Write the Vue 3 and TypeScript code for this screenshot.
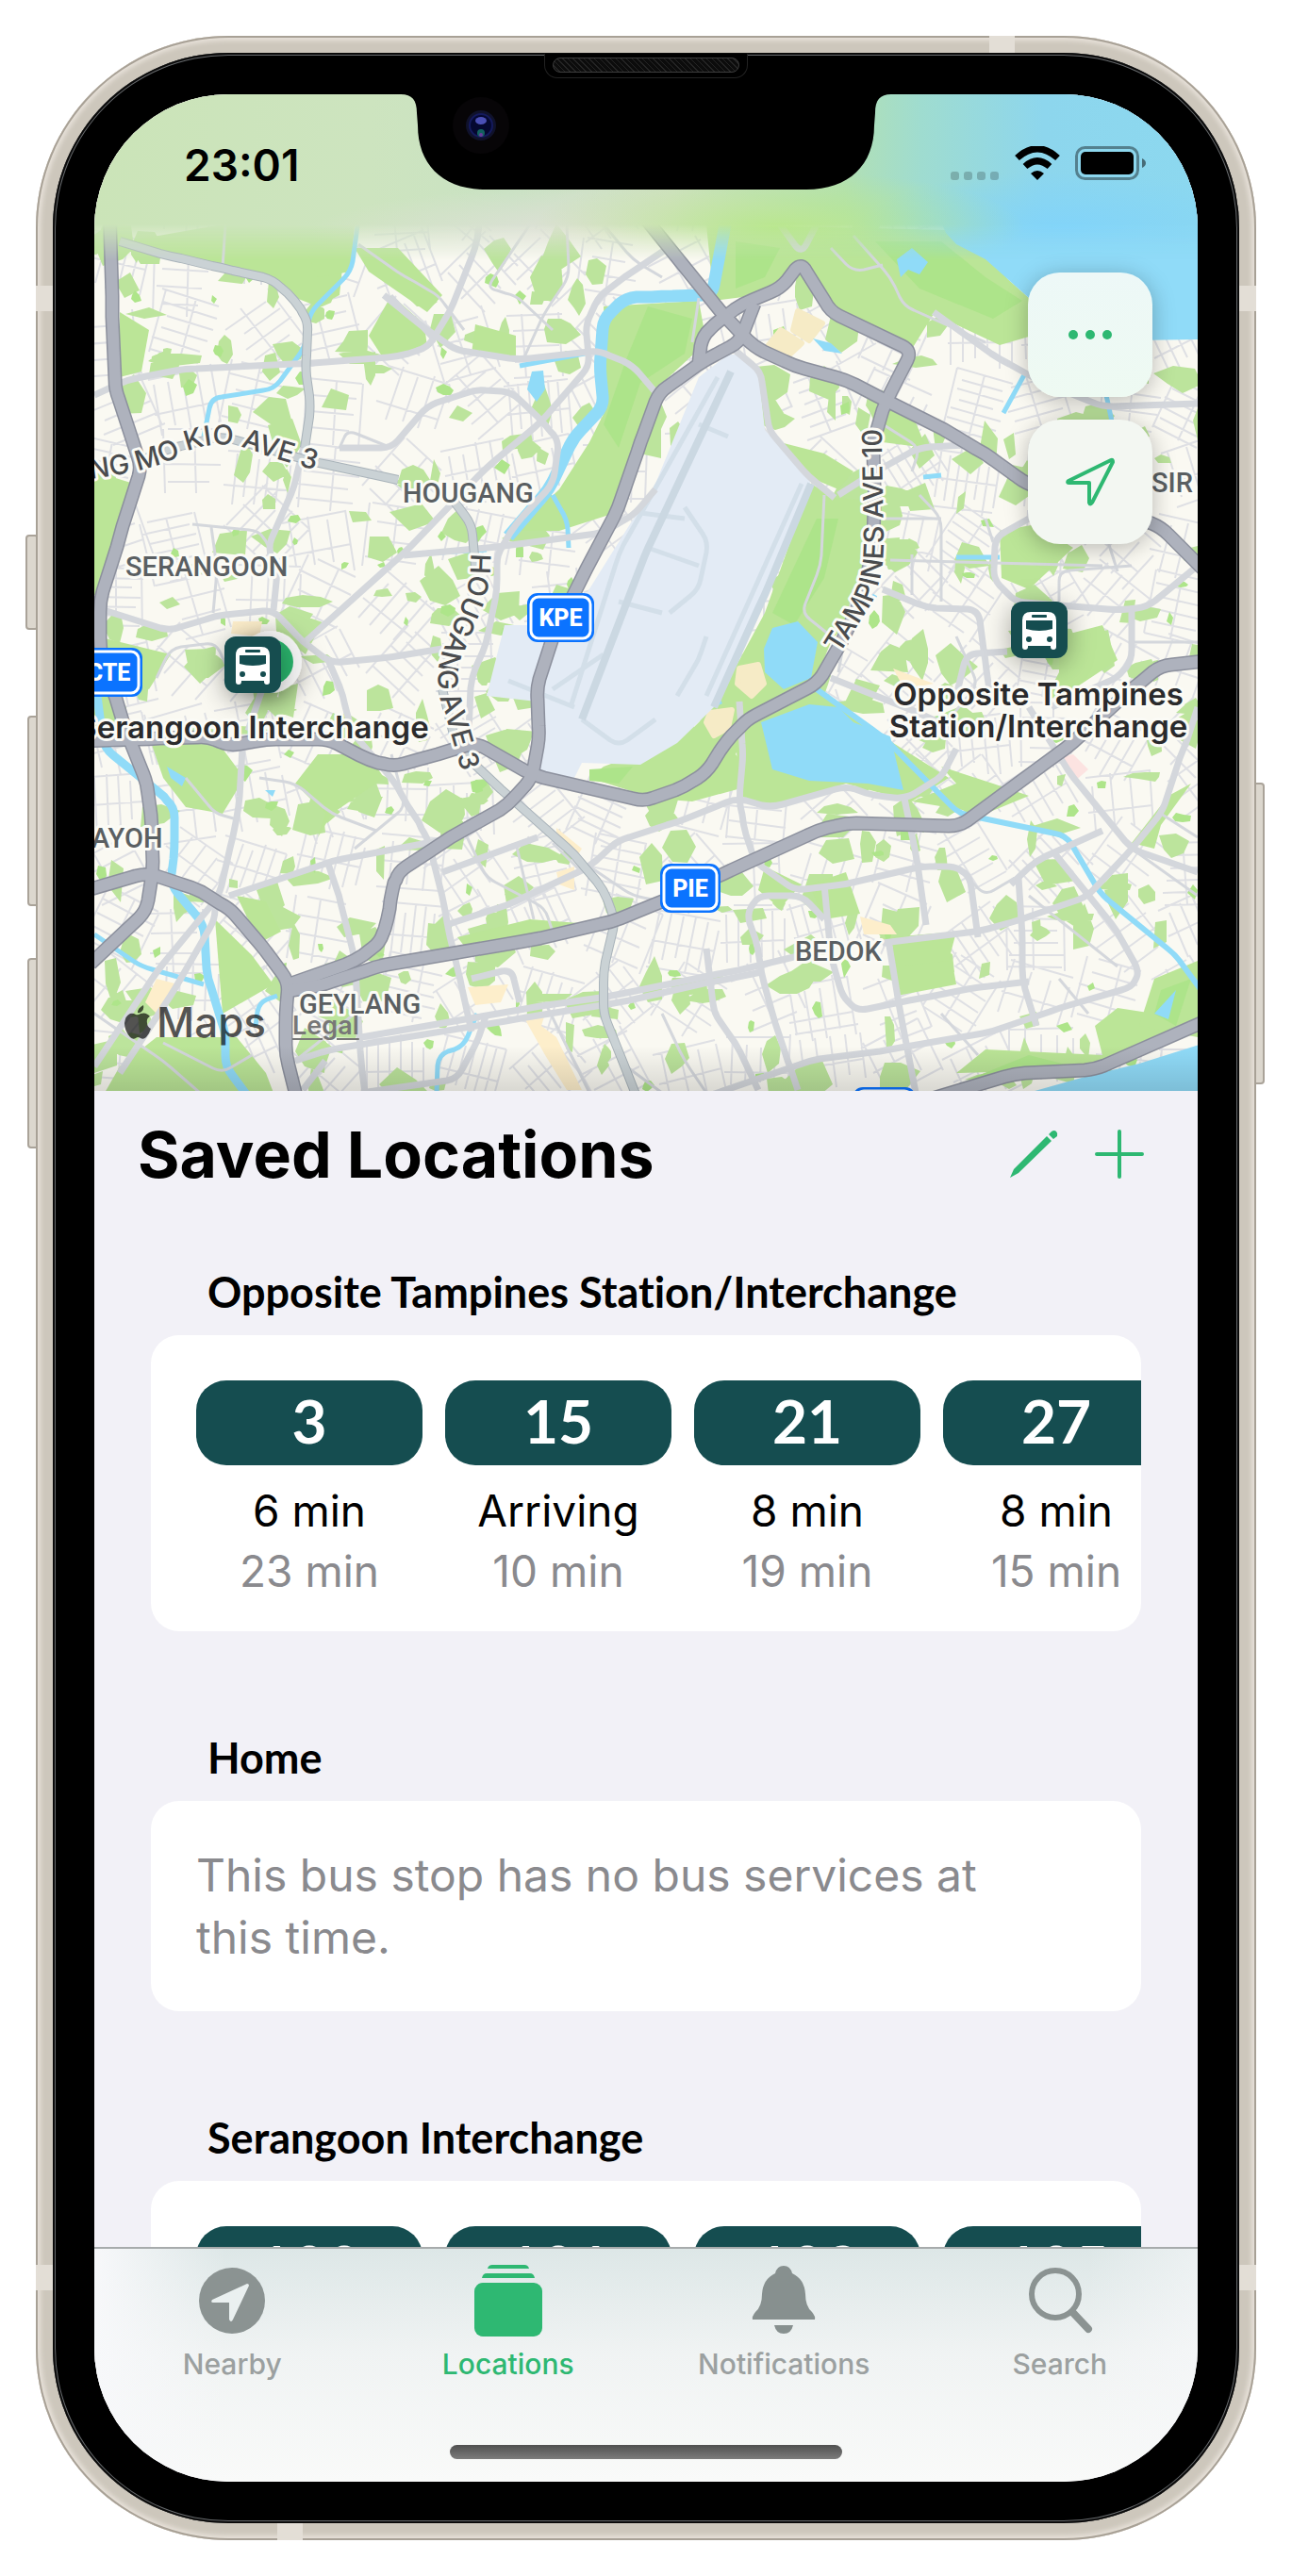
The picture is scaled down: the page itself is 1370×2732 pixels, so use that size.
<script setup lang="ts">
interface Service { no: string; next: string; later: string }
interface Stop { name: string; services: Service[] }
type Point = [number, number]

const stops: Stop[] = [
  {
    name: 'Opposite Tampines Station/Interchange',
    services: [
      { no: '3', next: '6 min', later: '23 min' },
      { no: '15', next: 'Arriving', later: '10 min' },
      { no: '21', next: '8 min', later: '19 min' },
      { no: '27', next: '8 min', later: '15 min' },
    ],
  },
  { name: 'Home', services: [] },
  {
    name: 'Serangoon Interchange',
    services: [
      { no: '100', next: '', later: '' },
      { no: '101', next: '', later: '' },
      { no: '103', next: '', later: '' },
      { no: '105', next: '', later: '' },
    ],
  },
]

// Survey grid to map canvas
const project = ([x, y]: Point): Point => [Math.round(x * 0.778 - 20), Math.round(y * 0.625 + 100)]
const parse = (s: string): Point[] => s.split(' ').map((p) => project(p.split(',').map(Number) as Point))
const area = (s: string) => 'M' + parse(s).map((p) => p.join(' ')).join('L') + 'Z'
// Joins the points with corners rounded over a short, bounded distance
const toward = (b: Point, a: Point): Point => {
  const dist = Math.hypot(a[0] - b[0], a[1] - b[1]) || 1
  const t = Math.min(0.4, 11 / dist)
  return [Math.round(b[0] + (a[0] - b[0]) * t), Math.round(b[1] + (a[1] - b[1]) * t)]
}
const line = (s: string) => {
  const p = parse(s)
  let d = `M${p[0].join(' ')}`
  for (let i = 1; i < p.length - 1; i++) {
    d += `L${toward(p[i], p[i - 1]).join(' ')}Q${p[i].join(' ')} ${toward(p[i], p[i + 1]).join(' ')}`
  }
  return d + `L${p[p.length - 1].join(' ')}`
}

let seed = 77
const rand = () => {
  seed = (seed * 16807) % 2147483647
  return seed / 2147483647
}

// Residential street patches
const streets = (() => {
  let d = ''
  for (let gy = 120; gy < 1060; gy += 70) {
    for (let gx = 20; gx < 1170; gx += 76) {
      const cx = gx + rand() * 24 - 12
      const cy = gy + rand() * 24 - 12
      const a = rand() * Math.PI
      const c = Math.cos(a)
      const s = Math.sin(a)
      const seg = (u1: number, v1: number, u2: number, v2: number) => {
        d += `M${(cx + u1 * c - v1 * s).toFixed(0)} ${(cy + u1 * s + v1 * c).toFixed(0)}L${(cx + u2 * c - v2 * s).toFixed(0)} ${(cy + u2 * s + v2 * c).toFixed(0)}`
      }
      const step = 10 + rand() * 12
      for (let v = -34; v <= 34; v += step) seg(-34 + rand() * 16, v, 34 - rand() * 16, v)
      for (let u = -30; u <= 32; u += 26 + rand() * 14) seg(u, -34, u + 2, 34)
    }
  }
  return d
})()

// Neighbourhood parks
const blobs = (count: number, min: number, max: number) => {
  let d = ''
  for (let i = 0; i < count; i++) {
    const cx = rand() * 1170
    const cy = 110 + rand() * 950
    const n = 4 + Math.floor(rand() * 4)
    const rx = min + rand() * (max - min)
    const ry = min + rand() * (max - min)
    const turn = rand() * 3
    for (let k = 0; k < n; k++) {
      const a = turn + (k / n) * Math.PI * 2
      const r = 0.5 + rand() * 0.6
      d += `${k ? 'L' : 'M'}${(cx + Math.cos(a) * rx * r).toFixed(0)} ${(cy + Math.sin(a) * ry * r).toFixed(0)}`
    }
    d += 'Z'
  }
  return d
}
const parks = blobs(430, 6, 29)
const groves = blobs(120, 4, 11)

const greens = [
  '720,200 850,190 860,260 790,340 760,440 735,550 660,580 600,580 660,510 700,430 725,370',
  '860,60 1190,70 1240,120 1300,185 1330,240 1260,265 1170,212 1140,272 1040,210 990,125 930,180 870,190',
  '1002,500 1035,525 1085,530 1085,640 1060,720 1030,770 1000,860 930,880 900,960 930,1010 840,1040 790,1035 700,1000 720,980 830,930 870,880 940,720',
  '930,870 1010,850 1100,930 1190,1000 1140,1040 1050,1010 950,1050 905,1030 900,930',
  '70,90 200,60 370,60 360,180 330,200 290,180 270,150 130,115',
  '430,180 475,230 480,270 420,290 400,250',
  '26,480 80,500 60,600 30,690 26,690',
  '60,210 100,240 90,310 60,320',
  '380,100 440,100 500,180 480,210 400,140',
  '30,760 130,790 100,850 60,830',
  '100,930 200,950 230,1000 200,1060 150,1050 120,1000',
  '330,1100 350,1060 420,1000 400,960 330,960 300,1010 340,1060',
  '26,850 70,880 60,920 26,920',
  '220,1200 260,1210 280,1260 250,1280',
  '190,1240 240,1300 270,1350 200,1400',
  '60,1490 110,1440 220,1440 260,1500 270,1535 40,1535',
  '1110,1290 1190,1280 1200,1350 1120,1370',
  '1110,1270 1200,1260 1190,1310 1120,1320',
  '1200,1500 1240,1460 1400,1470 1390,1420 1420,1390 1470,1400 1530,1330 1530,1430 1380,1495',
  '1470,1340 1530,1310 1530,1440 1450,1420',
  '1260,580 1310,570 1360,610 1300,680 1262,660',
  '1340,760 1400,740 1420,800 1360,850 1320,870 1340,820',
  '1080,370 1140,380 1160,440 1100,430',
  '1140,1040 1200,1010 1180,980 1250,1010 1300,1030 1240,1060',
  '960,430 1020,450 1060,480 1040,510 1000,490',
  '1440,1110 1490,1030 1520,1010 1480,1080 1470,1120',
  '520,1270 620,1240 720,1250 640,1270 540,1300',
  '1000,1180 1050,1160 1070,1230 1020,1240',
  '940,1150 990,1180 960,1220 930,1190',
  '300,60 380,60 375,140 330,150',
  '545,230 600,250 600,290 540,280',
]
const darkGreens = [
  '780,200 840,220 830,280 770,330 740,440 720,400 750,290',
  '900,90 960,100 940,150 900,170',
  '1010,560 1040,560 1020,660 980,740 950,720',
  '700,985 760,980 740,1010 700,1005',
  '1480,1360 1520,1340 1500,1420 1470,1400',
  '1220,1510 1300,1470 1360,1490 1280,1500',
  '1090,90 1180,90 1240,150 1290,190 1250,220 1150,170',
]
const water = [
  '1100,-170 1186,75 1200,95 1240,120 1300,185 1400,250 1440,258 1540,256 1540,-170',
  '950,745 985,735 1012,770 1003,830 965,850 940,820 938,780',
  '935,905 1000,875 1040,880 1060,905 1110,930 1128,1020 1080,1010 1000,1005 950,985',
  '622,310 638,308 640,340 628,362 616,340',
  '1120,120 1140,100 1162,125 1150,145 1135,138 1125,150',
  '1005,255 1030,262 1045,280 1020,275',
  '125,980 150,1000 145,1015 130,1000',
  '258,1020 272,1020 268,1032',
  '1280,1540 1380,1505 1450,1485 1540,1450 1540,1540',
  '1470,1400 1500,1360 1490,1410',
]
const sand = [
  '905,815 930,808 938,840 922,860 902,840',
  '865,890 895,885 890,915 870,928 860,905',
  '985,208 1018,228 1000,258 978,240',
  '962,240 990,262 970,285 945,265',
]
const malls = [
  '110,1340 140,1350 110,1400 95,1380', '655,1085 690,1120 680,1140 655,1110', '655,1160 680,1150 680,1190 660,1180',
  '1070,1235 1110,1250 1120,1265 1075,1265', '535,1355 590,1350 580,1380 545,1385', '215,735 255,735 250,760 212,755',
  '1115,815 1170,840 1130,850', '610,1405 640,1400 635,1420 655,1440 690,1530 670,1530 640,1470',
]

const lanes = [
  '385,95 450,150 495,180 530,240', '670,60 672,150 640,210 610,290', '205,60 200,135', '720,60 760,120 800,150',
  '620,60 560,170 600,180 650,240', '430,180 490,260', '850,185 840,260', '1060,80 1110,150 1130,200 1240,260',
  '160,570 250,580 265,610 275,650', '185,575 193,650 188,720', '110,830 130,780 190,770 210,820', '1030,100 1060,140 1100,130',
  '360,440 370,410 430,440', '1100,400 1150,440 1140,480', '1020,520 1015,640 990,720 1040,770', '1110,630 1400,640',
  '1150,520 1180,560 1180,700', '1240,560 1250,600', '1400,570 1420,650', '1100,560 1180,560', '1140,620 1140,690',
  '1060,680 1040,820', '1340,700 1340,650 1440,640', '1440,770 1530,770', '1200,760 1230,840 1190,900', '700,1150 760,1200 800,1210',
  '650,1110 690,1160', '530,1090 560,1170 640,1220 650,1260', '600,1110 625,1240', '430,960 450,1050 380,1120',
  '250,1000 300,1010 350,1060 410,1090', '150,1000 190,1060 220,1070', '300,1480 380,1400', '120,1450 200,1500 240,1470',
  '26,1400 120,1480 170,1535', '740,1480 800,1535', '800,1400 830,1480 860,1535', '640,1380 700,1535', '1200,1150 1240,1200 1280,1170',
  '1300,1200 1420,1320', '1340,1340 1380,1400', '1180,1400 1230,1470', '1440,1120 1530,1200', '1480,1060 1530,1100',
]
const roads = [
  '26,350 70,325 150,305 310,298 440,285 480,270 510,210 545,100 550,60',
  '420,180 480,240 520,275 605,290 715,275 760,300 790,345',
  '815,95 760,140 715,180 695,230 700,300 635,395 559,475 447,619 310,773',
  '360,440 430,440 480,370 545,340 595,345 640,400 660,430 650,500 600,570 575,620 575,680 560,770 540,830 535,960',
  '447,622 560,610 715,585 760,555 790,510', '38,715 130,750 190,725 270,715 310,770 350,805 430,795 500,780',
  '270,715 275,650 262,610 300,500 312,430', '345,800 365,860 375,920 430,1000 460,1060 480,1100 500,1200 510,1270 525,1340 540,1430',
  '255,850 235,920', '228,950 222,1050 215,1100 195,1200 110,1330 26,1490', '190,1200 190,1240 130,1370 60,1500',
  '210,1200 350,1140 500,1105', '345,1145 360,1200 380,1310 390,1480 395,1535', '500,1160 630,1100',
  '505,1250 600,1210 700,1150 740,1105 820,1075 900,1035 950,1050 1050,1015 1090,1030 1130,1035 1180,1000 1200,950',
  '540,1340 595,1325 605,1380', '390,1440 620,1390 730,1370 890,1330 990,1300', '300,1480 350,1460 600,1410 740,1380 870,1345 935,1330',
  '905,870 910,960 905,1030 910,1080 925,1140 980,1190 1050,1180 1150,1150 1200,1150 1220,1170 1230,1270',
  '1130,1035 1145,1130 1160,1250', '1020,1180 1030,1300 1045,1370 1065,1395 1150,1375 1230,1355 1300,1345',
  '1020,1240 990,1200 930,1200 915,1230 930,1290 935,1330 950,1400 970,1480 985,1530', '860,1290 870,1400 900,1450 930,1530',
  '1100,1280 1230,1260 1290,1240 1380,1200 1440,1120 1480,1060 1510,950 1530,880', '1108,1275 1125,1400 1145,1535',
  '1300,880 1360,1000 1440,1120 1530,1160', '1275,1180 1310,1140 1400,1090', '1335,1130 1420,1260 1450,1330 1440,1355 1340,1390 1250,1430 1110,1460 1000,1480 860,1540',
  '1285,1170 1290,1260 1290,1340 1310,1420', '1170,210 1260,290 1320,330 1400,370 1530,365', '1040,520 1090,480 1150,440 1215,435',
  '1300,560 1255,590 1250,660 1280,700 1420,715 1460,710 1530,640', '1440,710 1440,800 1420,830 1330,880', '1100,680 1160,710 1230,715 1240,800 1245,850',
  '1200,860 1215,790 1270,785', '1030,830 1130,880 1220,930', '900,275 935,310 945,410 1000,490 1035,525', '390,1535 520,1510 550,1440 560,1400',
  '310,1530 340,1480', '960,60 990,110 1010,60',
]
const avenues = [
  '60,90 130,115 200,135 270,155 300,190 318,225 314,300 320,370 312,440', '90,460 130,440 200,420 330,465 440,495', '515,530 540,570 545,640',
  '500,850 520,950 590,1030 680,1130 720,1190 735,1240 720,1330 720,1400 745,1480 765,1540',
]
const highways = [
  '46,30 50,200 54,340 90,470 60,590 34,700 34,780 50,850 72,930 98,1010 104,1080 106,1160 96,1225 20,1315',
  '20,1188 96,1162 160,1186 210,1220 250,1280 290,1345 286,1400 286,1470 302,1545',
  '10,938 100,935 180,930 210,945 260,935 345,935 400,970 433,980 480,965 545,940 625,995 775,1040 830,1015 860,990 885,940 915,900 1010,840 1045,770 1070,700 1086,620 1090,520 1086,430 1105,360 1140,275 1028,208 990,125 960,170 910,195 880,220 855,250 850,295',
  '770,40 882,213 925,268 980,300 1050,325 1105,360 1170,400 1240,450 1295,500 1400,540 1480,575 1540,650',
  '925,195 905,260 860,290 795,345 770,430 740,540 690,660 650,760 628,850 632,930 622,1000 590,1045 500,1110 440,1160 432,1190 425,1240 415,1280 380,1310 290,1350',
  '290,1362 340,1350 410,1320 620,1275 730,1245 800,1210 880,1165 1010,1090 1050,1077 1205,1082 1350,950 1440,850 1480,810 1540,802',
  '1150,1550 1280,1503 1390,1495 1540,1412',
]
const streams = [
  '387,40 375,140 320,210 312,270 270,340 185,355 175,420', '605,300 700,278', '455,620 560,612', '650,520 670,560 672,610',
  '26,1265 90,1320 175,1350', '245,1420 250,1380 275,1370', '1265,380 1295,310', '1405,350 1412,395', '492,1535 495,1470 530,1455 548,1400',
  '1155,490 1180,487', '1200,625 1260,625', '850,885 880,870', '1090,690 1080,710',
]
const rivers = [
  '885,60 868,180 800,182 750,185 720,220 715,300 720,370 680,420 645,510 590,590',
  '30,860 40,950 110,1020 135,1050 135,1120 130,1180 175,1250 180,1340 205,1430 205,1490 235,1540',
  '1010,850 1100,930 1205,1060 1350,1098 1400,1200 1500,1300 1540,1370',
]
const runways = ['893,310 780,610 690,900', '1002,500 940,690 870,880']
const taxiways = ['875,320 740,620 675,880', '690,900 740,945 790,900', '830,540 862,600 850,680 810,720', '780,610 850,640', '740,700 800,720', '720,790 650,850', '850,400 890,420', '820,860 850,800 860,760', '590,835 680,880', '990,500 860,860', '770,550 830,560']

const places = [
  { text: 'HOUGANG', x: 327, y: 433 },
  { text: 'SERANGOON', x: 33, y: 511 },
  { text: 'AYOH', x: -3, y: 799 },
  { text: 'GEYLANG', x: 217, y: 975 },
  { text: 'BEDOK', x: 743, y: 919 },
  { text: 'SIR', x: 1121, y: 422 },
]
const shields = [
  { text: 'KPE', x: 459, y: 529, w: 71 },
  { text: 'CTE', x: -20, y: 587, w: 71 },
  { text: 'PIE', x: 600, y: 816, w: 64 },
  { text: '', x: 804, y: 1053, w: 67 },
]
const pins = [
  { x: 138, y: 575, tx: 168, lines: ['Serangoon Interchange'] },
  { x: 972, y: 538, tx: 1001, lines: ['Opposite Tampines', 'Station/Interchange'] },
]
</script>

<template>
  <div class="page">
    <div class="phone">
      <span class="key key-mute"></span>
      <span class="key key-up"></span>
      <span class="key key-down"></span>
      <span class="key key-power"></span>
      <span class="band band-tl"></span><span class="band band-tr"></span>
      <span class="band band-bl"></span><span class="band band-br"></span>
      <span class="band band-top"></span><span class="band band-bottom"></span>
      <div class="bezel">
        <div class="speaker"><span></span></div>
        <main class="screen">
          <section class="map">
            <svg class="canvas" viewBox="0 0 1170 1057" preserveAspectRatio="xMidYMid slice">
              <defs>
                <filter id="shade" x="-100%" y="-100%" width="300%" height="300%">
                  <feDropShadow dx="0" dy="6" stdDeviation="14" flood-opacity=".35" />
                </filter>
                <path id="amk" d="M-25 410Q20 406 51 398T103 377Q140 364 178 382L262 407" />
                <path id="hga" d="M399 487Q400 520 388 545L368 595Q360 625 370 650L400 755" />
                <path id="tpa" d="M790 594L824 540Q836 515 837 480L836 420L834 310" />
              </defs>
              <rect width="1170" height="1057" fill="#faf9f2" />
              <path :d="streets" fill="none" stroke="#dfe0e4" stroke-width="2" />
              <path :d="parks" fill="#bce49c" />
              <path :d="groves" fill="#aee58a" />
              <path v-for="g in greens" :key="g" :d="area(g)" fill="#bbe597" />
              <path v-for="g in darkGreens" :key="g" :d="area(g)" fill="#ade48a" />
              <path v-for="s in malls" :key="s" :d="area(s)" fill="#fdeecb" />
              <path v-for="s in sand" :key="s" :d="area(s)" fill="#f6ebc6" stroke="#f6ebc6" stroke-width="6" stroke-linejoin="round" />
              <path :d="area('1345,965 1360,960 1380,985 1360,1008')" fill="#fce3e1" />
              <path v-for="w in water" :key="w" :d="area(w)" fill="#90dbf8" />
              <g fill="none" stroke="#90dbf8" stroke-linejoin="round">
                <path v-for="r in streams" :key="r" :d="line(r)" stroke-width="5" />
                <path v-for="(r, i) in rivers" :key="r" :d="line(r)" :stroke-width="i === 0 ? 13 : i === 1 ? 9 : 6" />
              </g>
              <path :d="area('890,282 912,282 930,305 940,410 1002,495 945,690 870,880 820,940 770,978 690,975 680,1000 625,990 640,930 628,870 560,860 585,740 670,740 740,600 790,500 850,320')" fill="#e3ebf5" />
              <g fill="none" stroke="#d3dfe9" stroke-linejoin="round">
                <path v-for="r in taxiways" :key="r" :d="line(r)" stroke-width="5" />
                <path v-for="r in runways" :key="r" :d="line(r)" stroke-width="8" stroke="#cbd8e2" />
              </g>
              <g fill="none" stroke="#d4d7dc" stroke-linejoin="round">
                <path v-for="r in lanes" :key="r" :d="line(r)" stroke-width="3" />
                <path v-for="r in roads" :key="r" :d="line(r)" stroke-width="7" />
                <path v-for="r in avenues" :key="r" :d="line(r)" stroke-width="10" stroke="#a9b3ba" />
                <path v-for="r in avenues" :key="r" :d="line(r)" stroke-width="8" stroke="#cad2d5" />
              </g>
              <g fill="none" stroke-linejoin="round">
                <path v-for="r in highways" :key="r" :d="line(r)" stroke="#8c909d" stroke-width="15" />
                <path v-for="r in highways" :key="r" :d="line(r)" stroke="#aeb2bd" stroke-width="12" />
              </g>
              <g class="road-name">
                <text><textPath href="#amk">ANG MO KIO AVE 3</textPath></text>
                <text><textPath href="#hga">HOUGANG AVE 3</textPath></text>
                <text><textPath href="#tpa">TAMPINES AVE 10</textPath></text>
              </g>
              <text v-for="p in places" :key="p.text" class="place" :x="p.x" :y="p.y">{{ p.text }}</text>
              <g v-for="s in shields" :key="s.text">
                <rect :x="s.x" :y="s.y" :width="s.w" height="52" rx="11" fill="#0b73ff" />
                <rect :x="s.x + 4" :y="s.y + 4" :width="s.w - 8" height="44" rx="8" fill="none" stroke="#fff" stroke-width="3" />
                <text class="shield" :x="s.x + s.w / 2" :y="s.y + 35">{{ s.text }}</text>
              </g>
              <g filter="url(#shade)">
                <circle cx="187" cy="602" r="33" fill="#f4f4f4" />
                <circle cx="187" cy="602" r="24" fill="#2bb36c" />
              </g>
              <g v-for="p in pins" :key="p.tx">
                <g :transform="`translate(${p.x} ${p.y})`">
                  <rect width="60" height="60" rx="12" fill="#154d50" filter="url(#shade)" />
                  <path d="M21 11h18q9 0 9 9v28q0 3-3 3t-3-3v-1H18v1q0 3-3 3t-3-3V20q0-9 9-9z" fill="#fff" />
                  <rect x="22" y="14" width="16" height="3" rx="1" fill="#154d50" />
                  <path d="M16 20h28v9q-14 4-28 0z" fill="#154d50" />
                  <circle cx="19" cy="40" r="3" fill="#154d50" /><circle cx="41" cy="40" r="3" fill="#154d50" />
                </g>
                <text v-for="(t, i) in p.lines" :key="t" class="pin-name" :x="p.tx" :y="(p.lines.length > 1 ? 648 : 683) + i * 34">{{ t }}</text>
              </g>
            </svg>
            <div class="haze"></div>
            <header class="status">
              <time class="clock">23:01</time>
              <div class="signals">
                <svg width="52" height="36" viewBox="0 0 52 36" fill="#000" fill-opacity=".2">
                  <rect x="0" y="27" width="9" height="9" rx="3" /><rect x="14" y="27" width="9" height="9" rx="3" />
                  <rect x="28" y="27" width="9" height="9" rx="3" /><rect x="42" y="27" width="9" height="9" rx="3" />
                </svg>
                <svg width="48" height="36" viewBox="0 0 48 36" fill="none" stroke="#000">
                  <path d="M2.500 12.500Q24-7 45.500 12.500" stroke-width="7" />
                  <path d="M11 21.500Q24 10 37 21.500" stroke-width="7" />
                  <path d="M17 29q7-6 14 0l-7 7z" fill="#000" stroke="none" />
                </svg>
                <svg width="76" height="36" viewBox="0 0 76 36">
                  <rect x="1.500" y="1.500" width="65" height="33" rx="9" fill="none" stroke="#000" stroke-opacity=".4" stroke-width="3" />
                  <rect x="6" y="6" width="56" height="24" rx="5" />
                  <path d="M71 13q4 2 4 5t-4 5z" fill-opacity=".5" />
                </svg>
              </div>
            </header>
            <svg class="notch" width="520" height="101" viewBox="0 0 520 101">
              <path d="M0 0C12 0 17 6 17 20L18 33C18 75 45 101 90 101L430 101C475 101 502 75 502 33L503 20C503 6 508 0 520 0Z" />
              <circle cx="85" cy="33" r="30" fill="#070507" />
              <circle cx="85" cy="33" r="16" fill="#10122b" />
              <circle cx="85" cy="33" r="12" fill="#050830" stroke="#141a5c" stroke-width="2" />
              <ellipse cx="85" cy="28" rx="6" ry="4" fill="#4a4fb5" />
              <circle cx="85" cy="41" r="4" fill="#12605f" /><circle cx="85" cy="43" r="2" fill="#6b3a9c" />
            </svg>
            <div class="tools">
              <button type="button" aria-label="More options">
                <svg width="48" height="12" viewBox="0 0 48 12" fill="#2eb872"><circle cx="6" cy="6" r="5" /><circle cx="24" cy="6" r="5" /><circle cx="42" cy="6" r="5" /></svg>
              </button>
              <button type="button" aria-label="My location">
                <svg width="52" height="52" viewBox="0 0 52 52" fill="none" stroke="#2eb872" stroke-width="4" stroke-linejoin="round"><path d="M48 3L3 25q-2 2 1 2h21v21q1 3 3 0L50 5q0-3-2-2z" /></svg>
              </button>
            </div>
            <div class="credit">
              <span class="brand">
                <svg width="29" height="36" viewBox="0 0 29 36" fill="currentColor"><path d="M20 0q1 5-2 7-3 2-4 1 0-5 6-8zM27 12q-4 2-3 7 0 4 4 6-2 6-5 9-3 3-6 1t-5 0q-3 2-6-1-6-7-6-15 1-8 6-10 3-1 6 1 2 1 5-1 6-2 10 3z" /></svg>
                Maps
              </span>
              <a href="#legal">Legal</a>
            </div>
          </section>

          <section class="sheet">
            <header class="title-bar">
              <h1>Saved Locations</h1>
              <div class="actions">
                <button type="button" aria-label="Edit">
                  <svg width="52" height="52" viewBox="0 0 52 52" fill="#2eb872"><path d="M40 7l5 5L10 46l-9 5 4-9zM42 5l3-3q3-2 5 0t1 5l-4 3z" /></svg>
                </button>
                <button type="button" aria-label="Add">
                  <svg width="52" height="52" viewBox="0 0 52 52" fill="none" stroke="#2eb872" stroke-width="4" stroke-linecap="round"><path d="M26 2v48M2 26h48" /></svg>
                </button>
              </div>
            </header>
            <article v-for="stop in stops" :key="stop.name" class="stop">
              <h2>{{ stop.name }}</h2>
              <ul v-if="stop.services.length" class="card services">
                <li v-for="s in stop.services" :key="s.no">
                  <strong>{{ s.no }}</strong>
                  <span>{{ s.next }}</span>
                  <span class="later">{{ s.later }}</span>
                </li>
              </ul>
              <p v-else class="card empty">This bus stop has no bus services at this time.</p>
            </article>
          </section>

          <nav class="tabs">
            <a href="#nearby">
              <svg viewBox="0 0 72 76"><circle cx="36" cy="38" r="35" fill="#8b9392" /><path d="M52 20L15 37q-2 3 1 3h17v18q2 4 4 0l17-36q0-2-2-2z" fill="#eaf0f0" /></svg>
              Nearby
            </a>
            <a href="#locations" class="active">
              <svg viewBox="0 0 72 76" fill="#2eb872"><path d="M14 4q1-4 5-4h34q4 0 5 4zM8 14q1-5 5-5h46q4 0 5 5z" /><rect y="19" width="72" height="57" rx="9" /></svg>
              Locations
            </a>
            <a href="#notifications">
              <svg viewBox="0 0 72 76" fill="#87908f"><path d="M36 1q7 0 9 8 13 6 14 22 0 13 7 19 4 5 3 8H3q-1-3 3-8 7-6 7-19 1-16 14-22 2-8 9-8zM26 64h20q-2 9-10 9t-10-9z" /></svg>
              Notifications
            </a>
            <a href="#search">
              <svg viewBox="0 0 72 76" fill="none" stroke="#8b9392" stroke-linecap="round"><circle cx="31" cy="31" r="25" stroke-width="6" /><path d="M50 51l16 17" stroke-width="8" /></svg>
              Search
            </a>
            <span class="home"></span>
          </nav>
        </main>
      </div>
    </div>
  </div>
</template>

<style>
body { margin: 0; background: #fff; }
</style>

<style scoped>
* { box-sizing: border-box; }
.page { padding: 38px; font-family: Inter, "Liberation Sans", sans-serif; color: #000; }
button { border: 0; padding: 0; background: none; display: flex; align-items: center; justify-content: center; }
svg { display: block; flex: none; }
.phone {
  position: relative; max-width: 1294px; margin: 0 auto; padding: 18px; border-radius: 204px;
  background: #d6d0c6;
  box-shadow: inset 0 0 0 2px #a8a196, inset 0 0 5px 5px #e8e2da, inset 0 0 0 18px #cdc7bc;
}
.bezel {
  position: relative; padding: 44px; border-radius: 186px; background: #000;
  box-shadow: inset 0 0 0 2px #0b0b0b, inset 0 0 0 3px #66696c;
}
.key { position: absolute; z-index: -1; width: 14px; background: #dcd7ce; border: 2px solid #aaa399; border-radius: 4px; }
.key-mute { left: -11px; top: 529px; height: 101px; }
.key-up { left: -9px; top: 721px; height: 202px; }
.key-down { left: -9px; top: 978px; height: 202px; }
.key-power { right: -9px; top: 792px; height: 320px; }
.band { position: absolute; background: #e3ded6; }
.band-tl, .band-tr, .band-bl, .band-br { width: 18px; height: 27px; }
.band-tl { left: 0; top: 265px; }
.band-tr { right: 0; top: 265px; }
.band-bl { left: 0; bottom: 265px; }
.band-br { right: 0; bottom: 265px; }
.band-top, .band-bottom { width: 27px; height: 18px; }
.band-top { top: 0; right: 256px; }
.band-bottom { bottom: 0; left: 256px; }
.speaker {
  position: absolute; top: 1px; left: 50%; margin-left: -108px; width: 216px; height: 26px; padding: 4px 8px;
  border: 1px solid #222; border-top: 0; border-radius: 0 0 14px 14px; background: #000;
}
.speaker span {
  display: block; height: 16px; border-radius: 8px; border: 1px solid #3c3c3c;
  background: repeating-linear-gradient(45deg, #242424 0 1px, #0c0c0c 1px 4px), #111;
}
.screen {
  position: relative; display: flex; flex-direction: column; aspect-ratio: 1170 / 2532; overflow: hidden;
  border-radius: 142px; background: #f2f1f7;
}
.map { position: relative; flex: none; height: 1057px; overflow: hidden; }
.map::after {
  content: ""; position: absolute; left: 0; right: 0; bottom: 0; height: 48px; pointer-events: none;
  background: linear-gradient(#0000, #0002);
}
.canvas { position: absolute; width: 100%; height: 100%; }
.haze {
  position: absolute; top: 0; left: 0; right: 0; height: 176px;
  background:
    radial-gradient(ellipse 260px 60px at 62% 80%, #b9e78e, #b9e78e00),
    radial-gradient(ellipse 300px 50px at 45% 84%, #e0e0d8, #e0e0d800),
    radial-gradient(ellipse 220px 60px at 88% 80%, #82d4f9, #82d4f900),
    linear-gradient(90deg, #cbe4b8 0%, #cde4bf 25%, #c9e2c3 38%, #d2e0c8 52%, #b2e0b4 68%, #9fdcd0 75%, #8dd6ed 86%, #8cd8ef 100%);
  mask-image: linear-gradient(#000 0 138px, #0000);
}
.status { position: relative; display: flex; justify-content: space-between; padding: 48px 54px 0 95px; }
.clock { font-size: 46px; line-height: 54px; font-weight: 600; }
.signals { display: flex; gap: 16px; padding-top: 7px; }
.notch { position: absolute; top: 0; left: 50%; margin-left: -260px; }
.tools { position: absolute; top: 189px; right: 48px; display: flex; flex-direction: column; gap: 24px; }
.tools button { width: 132px; height: 132px; border-radius: 34px; background: #f3f9f5; box-shadow: 0 4px 24px #0004; }
.tools button:first-child { background: linear-gradient(#edf8f7, #eefaf2); }
.tools button:last-child { background: #f3f7f2; }
.credit { position: absolute; left: 32px; bottom: 40px; display: flex; align-items: flex-end; gap: 28px; }
.brand { display: flex; align-items: center; gap: 5px; font-size: 44px; line-height: 54px; font-weight: 500; color: #000a; padding-bottom: 6px; }
.credit a { font-size: 27px; line-height: 42px; font-weight: 600; color: #777; text-underline-offset: 4px; padding-bottom: 8px; }
.road-name text, .place, .pin-name { paint-order: stroke; stroke: #fbfbf6; stroke-width: 6px; stroke-linejoin: round; }
.road-name text { font: 500 29px Inter, sans-serif; fill: #4a4c4e; }
.place { font: 500 29px Roboto, sans-serif; fill: #5a5f62; }
.pin-name { font: 600 33px Inter, sans-serif; fill: #2a2a2c; text-anchor: middle; }
.shield { font: 800 25px Roboto, sans-serif; fill: #fff; text-anchor: middle; }
.sheet { flex: 1; min-height: 0; overflow: hidden; }
.title-bar { display: flex; align-items: center; justify-content: space-between; height: 134px; padding: 0 57px 0 46px; }
h1 { margin: 0; font-size: 68px; line-height: 80px; font-weight: 700; }
.actions { display: flex; gap: 39px; }
.stop { padding: 0 60px 55px; }
h2 { margin: 0; padding: 55px 60px 22px; font: 700 45px/48px Lato, sans-serif; font-variant-ligatures: none; white-space: nowrap; }
.card { margin: 0; border-radius: 30px; background: #fff; }
.services { display: flex; gap: 24px; padding: 48px 0 32px 48px; overflow: hidden; list-style: none; }
.services li { flex: none; width: 240px; display: flex; flex-direction: column; text-align: center; font-size: 46px; line-height: 64px; }
.services strong {
  height: 90px; margin-bottom: 16px; border-radius: 32px; background: #154d50; color: #fff;
  font: 700 64px/86px Lato, sans-serif;
}
.services span { min-height: 64px; }
.later, .empty { color: #8a8a8e; }
.empty { padding: 46px 96px 45px 48px; font-size: 48px; line-height: 66px; }
.tabs {
  position: relative; flex: none; display: flex; align-items: flex-start; height: 249px; padding-top: 17px;
  border-top: 2px solid #a7abac;
  background: linear-gradient(90deg, #f7f8fa, #f7f8fa00 12%, #f7f8fa00 90%, #f7f8fa90), linear-gradient(#dde7e7, #f0f3f3 45%, #f9faf9);
}
.tabs a {
  flex: 1; display: flex; flex-direction: column; align-items: center; gap: 11px;
  font-size: 30px; line-height: 36px; font-weight: 500; color: #9ba0a0; text-decoration: none;
}
.tabs a svg { width: 72px; height: 76px; }
.tabs .active { color: #2eb872; }
.home { position: absolute; left: 50%; bottom: 24px; margin-left: -208px; width: 416px; height: 15px; border-radius: 8px; background: linear-gradient(#505050, #7c7c7c); }
</style>
